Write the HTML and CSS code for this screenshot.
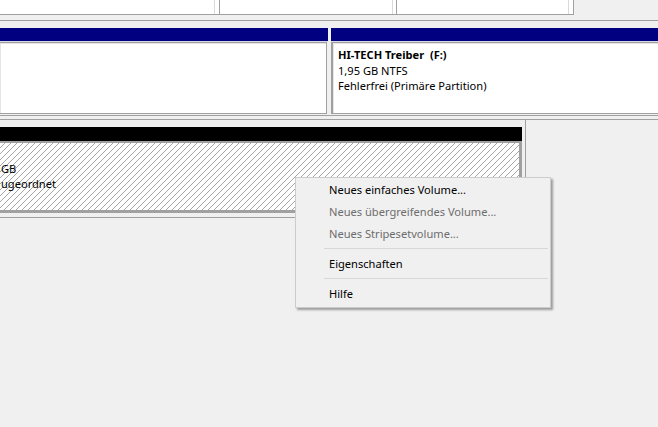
FILE: index.html
```html
<!DOCTYPE html>
<html lang="de">
<head>
  <meta charset="UTF-8" />
  <title>Datenträgerverwaltung</title>
  <link rel="stylesheet" href="styles.css">
</head>
<body>

  <!-- Volumeliste (oberer Bereich) -->
  <div class="volumes">
    <div class="vol-row">
      <div class="vol-cell c1"></div>
      <div class="vol-cell c2"></div>
      <div class="vol-cell c3"></div>
    </div>
  </div>

  <!-- Datenträger 1 -->
  <div class="disk disk-1">
    <div class="part part-left">
      <div class="bar bar-primary"></div>
      <div class="part-body"></div>
    </div>
    <div class="part part-f">
      <div class="bar bar-primary"></div>
      <div class="part-body">
        <div class="line name">HI-TECH Treiber&nbsp; (F:)</div>
        <div class="line">1,95 GB NTFS</div>
        <div class="line">Fehlerfrei (Primäre Partition)</div>
      </div>
    </div>
  </div>

  <!-- Datenträger 2 (nicht zugeordnet, ausgewählt) -->
  <div class="disk disk-2">
    <div class="disk-frame">
      <div class="part part-free">
        <div class="bar bar-free"></div>
        <div class="part-body hatched">
          <div class="line">&nbsp;</div>
          <div class="line">GB</div>
          <div class="line">ugeordnet</div>
        </div>
      </div>
    </div>
  </div>

  <!-- Kontextmenü -->
  <ul class="menu">
    <li class="item">Neues einfaches Volume...</li>
    <li class="item disabled">Neues übergreifendes Volume...</li>
    <li class="item disabled">Neues Stripesetvolume...</li>
    <li class="sep"></li>
    <li class="item">Eigenschaften</li>
    <li class="sep"></li>
    <li class="item">Hilfe</li>
  </ul>

</body>
</html>
```

FILE: styles.css
```css
body {
  margin: 0;
  width: 658px;
  height: 427px;
  overflow: hidden;
  position: relative;
  background: #f0f0f0;
  font-family: "Noto Sans", "DejaVu Sans", sans-serif;
  font-size: 11.1px;
  color: #000;
}

/* Volumeliste */
.volumes {
  height: 20px;
}

.vol-row {
  display: flex;
  width: 573px;
  height: 14px;
  background: #fff;
  border-right: 1px solid #a0a0a0;
  border-bottom: 1px solid #a0a0a0;
}

.vol-cell {
  height: 14px;
  border-right: 1px solid #dadada;
}

.c1 {
  width: 214px;
  margin-right: 4px;
}

.c2,
.c3 {
  border-left: 1px solid #a0a0a0;
}

.c2 {
  width: 172px;
  margin-right: 3px;
}

.c3 {
  width: 171px;
}

/* Datenträgerzeilen */
.disk {
  display: flex;
  border-top: 1px solid #a0a0a0;
  border-bottom: 1px solid #a0a0a0;
}

.disk-1 {
  padding: 7px 0 1px 0;
}

.disk-2 {
  margin-top: 3px;
  border-bottom: none;
}

.disk-frame {
  width: 525px;
  padding-top: 7px;
  padding-bottom: 4px;
  border-right: 1px solid #a0a0a0;
  border-bottom: 1px solid #a0a0a0;
}

.part {
  display: flex;
  flex-direction: column;
}

.part-left {
  width: 328px;
  margin-right: 3px;
}

.part-f {
  flex: 1;
}

.part-free {
  width: 522px;
}

.bar {
  height: 13px;
}

.bar-primary {
  background: #000080;
  border-bottom: 1px solid #d8d8e8;
}

.bar-free {
  height: 14px;
  background: #000;
}

.part-body {
  height: 66px;
  background: #fff;
  border: 1px solid #a0a0a0;
  box-shadow: inset 1px 1px 0 #e4e4e4;
  padding: 4px 0 0 6px;
  line-height: 15.5px;
}

.part-left .part-body {
  border-left: none;
  margin-right: 1px;
}

.part-f .part-body {
  border-left-width: 2px;
  border-right: none;
  padding-left: 5px;
}

.name {
  font-weight: bold;
}

.hatched {
  height: 65px;
  padding: 2px 0 0 0;
  border: 2px solid #a0a0a0;
  border-left: none;
  border-bottom-width: 3px;
  border-right-width: 3px;
  box-shadow: none;
  background: repeating-linear-gradient(135deg, #fff 0 3.2px, #a6a6a6 3.2px 4.24px);
}

.hatched .line {
  padding-left: 1px;
}

/* Kontextmenü */
.menu {
  position: absolute;
  left: 295px;
  top: 177px;
  width: 254px;
  margin: 0;
  padding: 1px 0 2px 0;
  list-style: none;
  background: #f0f0f0;
  border: 1px solid #cccccc;
  box-shadow: 2px 2px 2px rgba(0, 0, 0, 0.35);
}

.item {
  height: 22px;
  line-height: 22px;
  padding-left: 33px;
}

.item.disabled {
  color: #6d6d6d;
}

.sep {
  height: 1px;
  margin: 3px 2px 4px 28px;
  background: #d7d7d7;
}
```
